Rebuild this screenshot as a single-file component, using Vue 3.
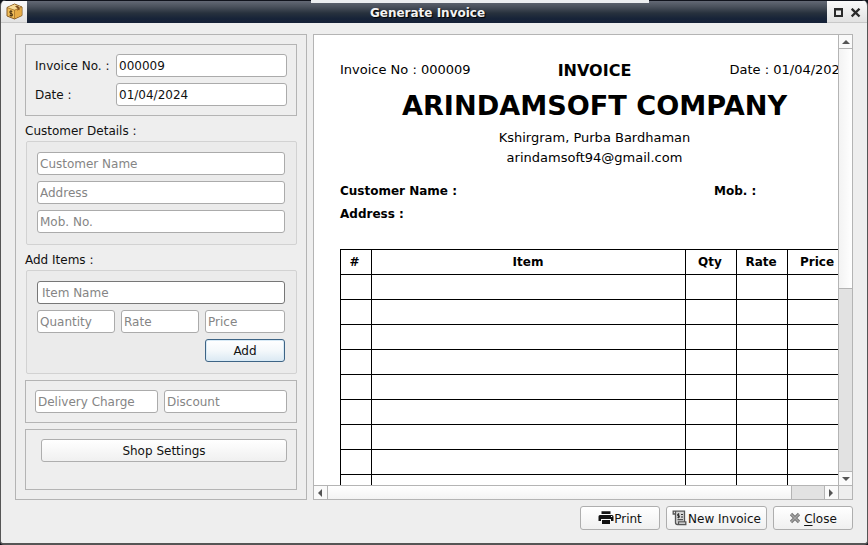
<script setup>
import { ref } from 'vue'

const invoiceNo = ref('000009')
const date = ref('01/04/2024')
const columns = ['#', 'Item', 'Qty', 'Rate', 'Price']
const rows = 9
</script>

<template>
  <div class="window">
    <header class="titlebar">
      <div class="tab tab-left">
        <svg width="17" height="17" viewBox="0 0 17 17">
          <path d="M1 4.500 8.500 1 16 4v8.500L8.500 16 1 13z" fill="#f0bd58" stroke="#8a5e24" stroke-width="1" />
          <path d="M1.500 4.500 8.500 1.500l7 2.700L8.500 7z" fill="#f8dc98" />
          <path d="M8.500 7 15.500 4.300v8L8.500 15.500z" fill="#e6ab45" />
          <path d="M1 4.500 8.500 7.200 16 4M8.500 7.200V16" fill="none" stroke="#9a6a28" stroke-width=".7" />
          <path d="M11 2.500 13.500 4.200v3l-1-.5-1 1.300V5.200L9 3.400z" fill="#80501f" />
          <path d="M6.300 8.500 4 8v2.200l2.300.7v2L3.600 12.300M5 7.300v6.400" fill="none" stroke="#4a3213" stroke-width="1" />
        </svg>
      </div>
      <h1 class="title">Generate Invoice</h1>
      <div class="tab tab-right">
        <svg width="10" height="10" viewBox="0 0 10 10"><path d="M0 0h9v9H0zM2 2.500v4.500h5V2.500z" fill="#2a2a2a" fill-rule="evenodd" /></svg>
        <svg width="10" height="10" viewBox="0 0 10 10"><path d="M.7.700l7.800 7.800M8.500.7L.7 8.500" fill="none" stroke="#2a2a2a" stroke-width="2.300" /></svg>
      </div>
      <div class="highlight"></div>
    </header>

    <main class="body">
      <section class="side">
        <div class="frame meta">
          <label for="no">Invoice No. :</label>
          <input id="no" v-model="invoiceNo" />
          <label for="date">Date :</label>
          <input id="date" v-model="date" />
        </div>
        <div class="caption">Customer Details :</div>
        <div class="group">
          <input placeholder="Customer Name" />
          <input placeholder="Address" />
          <input placeholder="Mob. No." />
        </div>
        <div class="caption">Add Items :</div>
        <div class="group">
          <input class="combo" placeholder="Item Name" />
          <div class="trio">
            <input placeholder="Quantity" />
            <input placeholder="Rate" />
            <input placeholder="Price" />
          </div>
          <button class="btn add">Add</button>
        </div>
        <div class="frame charges">
          <input placeholder="Delivery Charge" />
          <input placeholder="Discount" />
        </div>
        <div class="frame shop">
          <button class="btn">Shop Settings</button>
        </div>
      </section>

      <section class="preview">
        <div class="viewport">
          <div class="page">
            <div class="top">
              <span class="page-no">Invoice No : {{ invoiceNo }}</span>
              <strong>INVOICE</strong>
              <span class="page-date">Date : {{ date }}</span>
            </div>
            <h2>ARINDAMSOFT COMPANY</h2>
            <p>Kshirgram, Purba Bardhaman</p>
            <p>arindamsoft94@gmail.com</p>
            <div class="client">
              <span>Customer Name :</span><span>Mob. :</span>
              <span>Address :</span>
            </div>
            <div class="table">
              <div v-for="c in columns" :key="c" class="cell" :class="{ item: c === 'Item', edge: c === '#' || c === 'Price' }">{{ c }}</div>
              <template v-for="r in rows" :key="r">
                <div v-for="c in columns" :key="c" class="cell"></div>
              </template>
            </div>
          </div>
        </div>
        <div class="vbar">
          <div class="arrow"><svg width="8" height="4" viewBox="0 0 8 4"><path d="M0 4 4 0l4 4z" fill="#555" /></svg></div>
          <div class="handle"></div>
          <div class="groove"></div>
          <div class="arrow"><svg width="8" height="4" viewBox="0 0 8 4"><path d="M0 0h8L4 4z" fill="#555" /></svg></div>
        </div>
        <div class="hbar">
          <div class="arrow"><svg width="4" height="8" viewBox="0 0 4 8"><path d="M4 0v8L0 4z" fill="#555" /></svg></div>
          <div class="handle"></div>
          <div class="groove"></div>
          <div class="arrow"><svg width="4" height="8" viewBox="0 0 4 8"><path d="M0 0v8l4-4z" fill="#555" /></svg></div>
        </div>
        <div class="corner"></div>
      </section>
    </main>

    <footer class="actions">
      <button class="btn">
        <svg width="16" height="16" viewBox="0 0 16 16">
          <path d="M3.500 1.300h9V4h-9zM2 5h12q1.500 0 1.500 1.500V11H13V9H3v2H.5V6.500Q.5 5 2 5zM4 10h8v4H4z" fill="#111" />
          <path d="M13 6.500h1.200" stroke="#fff" stroke-width="1" />
        </svg>
        <span>Print</span>
      </button>
      <button class="btn wide">
        <svg width="16" height="16" viewBox="0 0 16 16">
          <path d="M3.500 1.500h9v10.500H6l-2 2.500z" fill="#d5d5d5" />
          <path d="M3.500 4H1.200V1.200h11.300v10.500M3.500 1.500v11q0 2 2 2h8.300v-2.700H6.500v2.400" fill="none" stroke="#555" stroke-width="1.300" />
          <path d="M7.300 4.200H5.600v1.500h1.700v1.700H5.400M6.500 3.300v5M9 4.500h2M9 7h2M5.500 9.700H11" fill="none" stroke="#333" stroke-width="1" />
        </svg>
        <span>New Invoice</span>
      </button>
      <button class="btn close">
        <svg width="12" height="12" viewBox="0 0 12 12">
          <path d="M2 2l8 8M10 2l-8 8" stroke="#757575" stroke-width="3.200" />
          <path d="M2.200 2.200l7.600 7.600M9.800 2.200 2.200 9.800" stroke="#a4a4a4" stroke-width="1.400" />
        </svg>
        <span><u>C</u>lose</span>
      </button>
    </footer>
  </div>
</template>

<style>
body { background: #10141c; overflow: hidden; }
</style>

<style scoped>
* { box-sizing: border-box; }
.window {
  width: 868px; height: 545px; display: flex; flex-direction: column;
  background: #eee; border: 1px solid #555; border-width: 0 1px 2px;
  border-radius: 6px 6px 4px 4px; overflow: hidden;
  font: 12px "DejaVu Sans", sans-serif; color: #111;
}
.titlebar {
  position: relative; flex: none; height: 23px; display: flex; border-top: 1px solid #10131c;
  background: linear-gradient(#636975 0, #4b525d 25%, #27313d 55%, #172338 80%, #152137 100%);
}
.tab { display: flex; align-items: center; background: linear-gradient(#fafafa, #e2e2e2); border-bottom: 1px solid #c8c8c8; }
.tab-left { width: 26px; padding-left: 5px; }
.tab-right { width: 40px; padding: 3px 0 0 7px; gap: 7px; }
.title {
  flex: 1; margin: 0; padding-left: 1px; text-align: center; font-size: 12px; line-height: 24px;
  color: #f2f2f2; text-shadow: 1px 1px 1px #000;
}
.highlight { position: absolute; left: 310px; top: -1px; width: 338px; height: 3px; background: #eceef0; }
.body { flex: none; height: 466px; margin: 11px 14px 0; display: flex; gap: 6px; }
.side { width: 292px; border: 1px solid #b4b4b4; padding: 9px; }
.frame { border: 1px solid #b4b4b4; width: 272px; padding: 9px; }
.meta { height: 72px; display: grid; grid-template-columns: 75px 171px; gap: 6px; align-items: center; }
.caption { height: 25px; padding-top: 3px; line-height: 24px; }
.group {
  width: 271px; height: 104px; margin-left: 1px; padding: 10px 11px 0 10px;
  border: 1px solid #d2d2d2; border-radius: 2px; background: #ebebeb;
  display: flex; flex-direction: column; gap: 6px;
}
input {
  display: block; width: 100%; min-width: 0; height: 23px; padding: 0 3px 0 2px; margin: 0;
  border: 1px solid #ababab; border-radius: 3px; background: #fff; outline: none;
  font: 12px "DejaVu Sans", sans-serif; color: #111;
}
input::placeholder { color: #858585; opacity: 1; }
.combo { border-color: #777; padding-left: 4px; }
.trio { display: grid; grid-template-columns: 78px 78px 80px; gap: 6px; }
.btn {
  display: flex; align-items: center; justify-content: center; padding: 0;
  height: 23px; border: 1px solid #aeaeae; border-radius: 3px;
  background: linear-gradient(#fff, #f0f0f0); color: #111; font: 12px "DejaVu Sans", sans-serif;
}
.add { width: 80px; align-self: flex-end; border-color: #3e6485; background: linear-gradient(#fff, #f4f8fb 50%, #dbe9f3); box-shadow: inset 0 0 0 1px #d8eaf6; }
.charges { height: 43px; margin-top: 6px; display: grid; grid-template-columns: 123px 123px; gap: 6px; }
.shop { height: 61px; margin-top: 6px; padding-left: 15px; }
.shop .btn { width: 246px; }

.preview {
  width: 540px; border: 1px solid #b4b4b4; display: grid;
  grid-template: 450px 14px / 524px 14px; background: #fff;
}
.viewport { overflow: hidden; }
.page { width: 509px; margin-left: 26px; font-size: 13px; color: #000; }
.top { display: grid; grid-template-columns: 1fr 74px 1fr; height: 20px; line-height: 22px; margin-top: 25px; white-space: nowrap; }
.top strong { font-size: 16px; text-align: center; }
.page-no, .page-date { line-height: 20px; }
.page-date { padding-left: 98px; }
h2 { margin: 8px 0 0; height: 36px; line-height: 36px; font-size: 27.150px; text-align: center; white-space: nowrap; }
p { margin: 0; height: 20px; line-height: 20px; text-align: center; }
p:first-of-type { margin-top: 4px; }
.client {
  display: grid; grid-template: 23px 23px / 374px 1fr; margin-top: 12px;
  font-weight: bold; font-size: 12px; line-height: 23px;
}
.table {
  display: grid; grid-template-columns: 31px 314px 51px 51px 62px; grid-auto-rows: 25px;
  margin-top: 23px; border-top: 1px solid #000; border-left: 1px solid #000; width: 510px;
}
.cell {
  border-right: 1px solid #000; border-bottom: 1px solid #000;
  padding-right: 2px; text-align: center; font-weight: bold; font-size: 12px; line-height: 24px;
}
.cell.item { padding-right: 1px; }
.cell.edge { padding-right: 3px; }
.vbar { border-left: 1px solid #b4b4b4; display: flex; flex-direction: column; background: #e2e2e2; }
.hbar { border-top: 1px solid #b4b4b4; display: flex; background: #e2e2e2; }
.arrow { flex: none; width: 13px; height: 13px; display: flex; align-items: center; justify-content: center; background: #fafafa; }
.hbar .arrow { padding-right: 1px; }
.vbar .handle { height: 241px; border: solid #b4b4b4; border-width: 1px 0; background: linear-gradient(90deg, #f3f3f3, #fff); }
.hbar .handle { width: 465px; border: solid #b4b4b4; border-width: 0 1px; background: linear-gradient(#fff, #f3f3f3); }
.groove { flex: 1; }
.vbar .groove { border-bottom: 1px solid #b4b4b4; }
.hbar .groove { border-right: 1px solid #b4b4b4; }
.corner { border-top: 1px solid #b4b4b4; border-left: 1px solid #b4b4b4; background: #eee; }

.actions { display: flex; justify-content: flex-end; gap: 6px; padding: 6px 14px 0 0; }
.actions .btn { width: 80px; height: 24px; gap: 0; }
.actions .wide { width: 101px; }
.actions .close { gap: 3px; }
.actions span { white-space: nowrap; padding-top: 2px; }
.close u { text-underline-offset: 2px; }
</style>
